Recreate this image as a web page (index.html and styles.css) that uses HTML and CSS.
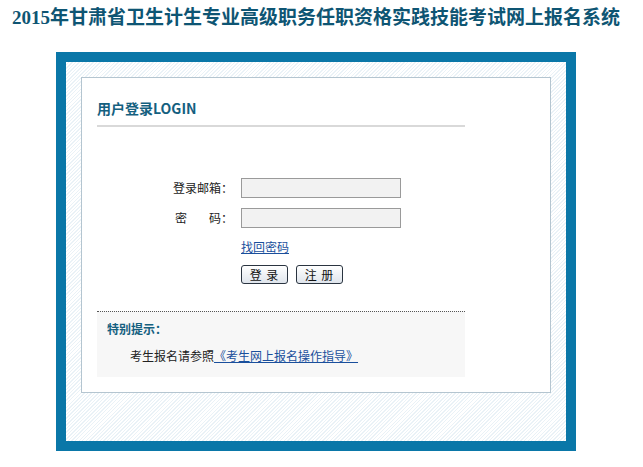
FILE: index.html
```html
<!DOCTYPE html>
<html lang="zh-CN">
<head>
  <meta charset="UTF-8">
  <title>用户登录</title>
  <link rel="stylesheet" href="styles.css">
</head>
<body>
  <h1 class="site-title">2015年甘肃省卫生计生专业高级职务任职资格实践技能考试网上报名系统</h1>

  <div class="frame">
    <div class="hatch">
      <div class="login-box">
        <div class="column">
          <h2 class="box-title">用户登录LOGIN</h2>

          <form class="login-form">
            <label class="field-label">登录邮箱：</label>
            <input type="text" class="field">
            <label class="field-label">密<span class="gap"></span>码：</label>
            <input type="password" class="field">
            <span></span>
            <a href="#" class="forgot">找回密码</a>
            <span></span>
            <div class="buttons">
              <button type="button" class="btn">登 录</button>
              <button type="button" class="btn">注 册</button>
            </div>
          </form>

          <div class="tips">
            <h3 class="tips-title">特别提示：</h3>
            <p class="tips-text">考生报名请参照<a href="#">《考生网上报名操作指导》</a></p>
          </div>
        </div>
      </div>
    </div>
  </div>
</body>
</html>
```

FILE: styles.css
```css
body {
  margin: 0;
  background: #fff;
  color: #222;
  font-family: "Noto Sans CJK SC", "Liberation Sans", sans-serif;
  font-size: 12px;
}
.site-title {
  margin: 7px 0 0;
  padding-right: 11px;
  text-align: center;
  font-family: "Liberation Serif", "Noto Sans CJK SC", serif;
  font-size: 19px;
  line-height: 22px;
  font-weight: bold;
  color: #0e5573;
}
.frame {
  width: 500px;
  margin: 23px 0 0 56px;
  border: 10px solid #0a77a8;
}
.hatch {
  padding: 15px 15px 48px;
  background: repeating-linear-gradient(135deg, #fff 0 1.5px, #eaf2f7 1.5px 2.5px);
}
.login-box {
  height: 314px;
  background: #fff;
  border: 1px solid #b4c5d0;
}
.column {
  width: 368px;
  margin-left: 15px;
  padding-top: 20px;
}
.box-title {
  margin: 0;
  padding-bottom: 7px;
  font-size: 14px;
  line-height: 20px;
  color: #14607f;
  border-bottom: 2px solid #d9d9d9;
}
.login-form {
  display: grid;
  grid-template-columns: 136px 160px;
  column-gap: 8px;
  row-gap: 10px;
  align-items: center;
  margin-top: 51px;
}
.field-label {
  text-align: right;
  line-height: 20px;
  color: #222;
}
.gap {
  display: inline-block;
  width: 22px;
}
.field {
  box-sizing: border-box;
  width: 160px;
  height: 20px;
  margin: 0;
  padding: 0 3px;
  background: #f2f2f2;
  border: 1px solid #9a9a9a;
}
.forgot {
  line-height: 16px;
  margin-top: 1px;
  color: #1a4f9c;
  text-decoration: underline;
}
.buttons {
  display: flex;
  gap: 8px;
}
.btn {
  width: 47px;
  height: 19px;
  padding: 0;
  font-family: "Noto Sans CJK SC", sans-serif;
  font-size: 12px;
  line-height: 16px;
  letter-spacing: 1px;
  color: #111;
  background: linear-gradient(#ffffff, #dfe5ec);
  border: 1px solid #2a3440;
  border-radius: 3px;
}
.tips {
  margin-top: 27px;
  height: 65px;
  background: #f7f7f7;
  border-top: 1px dotted #555;
}
.tips-title {
  margin: 0;
  padding: 9px 0 0 10px;
  font-size: 12px;
  line-height: 16px;
  color: #14607f;
}
.tips-text {
  margin: 11px 0 0 33px;
  line-height: 16px;
  color: #222;
}
.tips-text a {
  color: #1a4f9c;
  text-decoration: underline;
}
```
